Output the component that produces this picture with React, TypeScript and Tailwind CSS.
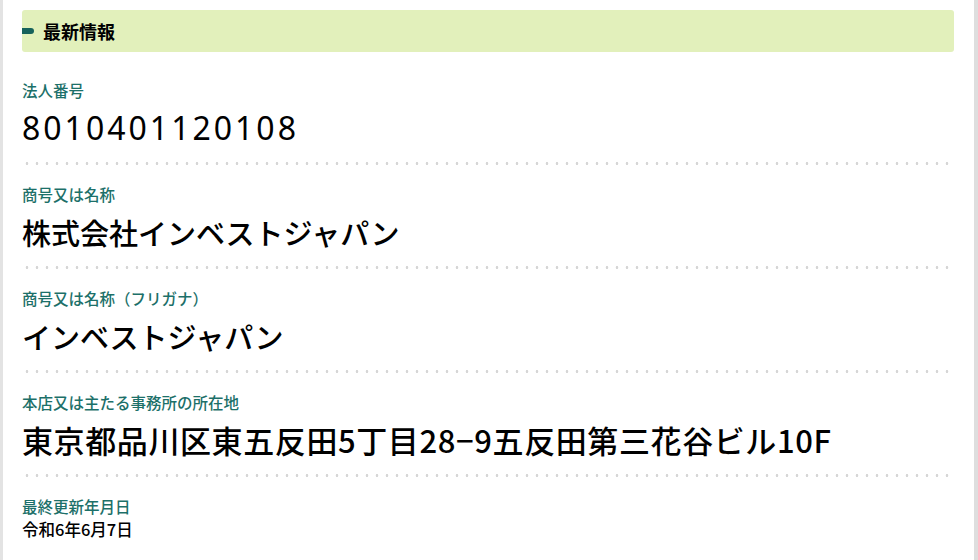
const fields = [
  { label: '法人番号', value: '8010401120108', cls: "font-['Noto_Sans',sans-serif] text-[32px] font-normal tracking-[3px]" },
  { label: '商号又は名称', value: '株式会社インベストジャパン', cls: 'text-[29px] font-medium' },
  { label: '商号又は名称（フリガナ）', value: 'インベストジャパン', cls: 'text-[29px] font-medium' },
  { label: '本店又は主たる事務所の所在地', value: '東京都品川区東五反田5丁目28−9五反田第三花谷ビル10F', cls: 'text-[31px] font-medium tracking-[0.6px]' },
]

export default function App() {
  return (
    <div className="flex h-[560px] w-[978px] bg-white font-['Noto_Sans_CJK_JP','Noto_Sans',sans-serif] text-black">
      <div className="w-[3px] bg-[#e3e3e3]" />
      <div className="flex-1 pl-[19px] pr-[20px] pt-[10px]">
        <div className="flex h-[42px] items-center gap-[9px] rounded-[3px] bg-[#e2f0bb]">
          <span className="h-[6px] w-[12px] rounded-r-full bg-[#17625b]" />
          <h2 className="text-[18px] font-bold leading-none">最新情報</h2>
        </div>

        {fields.map((f, i) => (
          <div key={f.label}>
            <div className={`${i === 0 ? 'pt-[27px]' : 'pt-[18px]'} text-[15.5px] font-medium leading-[22px] text-[#1c7069]`}>
              {f.label}
            </div>
            <div className={`mt-[5px] whitespace-nowrap leading-[44px] ${f.cls}`}>{f.value}</div>
            <div className="mt-[12px] h-[3px] bg-[radial-gradient(circle,#d6d6d6_1.1px,transparent_1.6px)] bg-[length:10px_3px]" />
          </div>
        ))}

        <div className="pt-[18px] text-[15.5px] font-medium leading-[22px] text-[#1c7069]">最終更新年月日</div>
        <div className="mt-[1px] text-[16.5px] font-medium leading-[22px]">令和6年6月7日</div>
      </div>
      <div className="w-[4px] bg-[#dedede]" />
    </div>
  )
}
